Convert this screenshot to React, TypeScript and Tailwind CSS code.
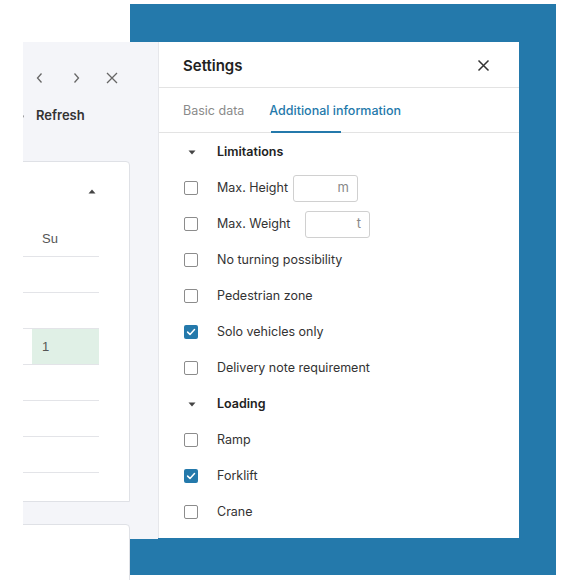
import React from "react";

function Box({ checked }: { checked?: boolean }) {
  if (checked) {
    return (
      <span className="flex h-[14px] w-[14px] shrink-0 items-center justify-center rounded-[2px] bg-[#2479ab]">
        <svg width="10" height="10" viewBox="0 0 10 10">
          <path d="M1.6 5.1 L4 7.4 L8.5 2.6" stroke="white" strokeWidth="1.5" fill="none" strokeLinecap="round" strokeLinejoin="round" />
        </svg>
      </span>
    );
  }
  return <span className="h-[14px] w-[14px] shrink-0 rounded-[2px] border-[1.5px] border-[#8c8c8c] bg-white" />;
}

function Caret() {
  return (
    <svg width="8" height="5" viewBox="0 0 8 5" className="ml-[29px] shrink-0">
      <path d="M0.5 0.5 H7.5 L4 4.5 Z" fill="#444" />
    </svg>
  );
}

function Section({ title }: { title: string }) {
  return (
    <div className="flex h-[36px] items-center">
      <Caret />
      <span className="ml-[21px] text-[12.5px] font-semibold text-[#222]">{title}</span>
    </div>
  );
}

function Row({ label, checked }: { label: string; checked?: boolean }) {
  return (
    <div className="flex h-[36px] items-center pl-[25px]">
      <Box checked={checked} />
      <span className="ml-[19px] text-[12.5px] text-[#333]">{label}</span>
    </div>
  );
}

function UnitInput({ unit }: { unit: string }) {
  return (
    <span className="flex h-[27px] w-[65px] items-center justify-end rounded-[3px] border border-[#d0d0d0] pr-[8px] text-[13px] text-[#888]">
      {unit}
    </span>
  );
}

function TableRow({ children, green }: { children?: React.ReactNode; green?: boolean }) {
  return (
    <div className="flex h-[36px] w-[76px] border-b border-[#e3e4e8]">
      <div className={`ml-[9px] flex w-[67px] items-center pl-[10px] ${green ? "bg-[#e0f0e6]" : ""}`}>{children}</div>
    </div>
  );
}

export default function App() {
  return (
    <div className="relative h-[580px] w-[580px] overflow-hidden bg-white" style={{ fontFamily: "Inter, 'Noto Sans', sans-serif" }}>
      {/* blue backdrop */}
      <div className="absolute left-[130px] top-[4px] h-[571px] w-[426px] bg-[#2479ab]" />

      {/* app window */}
      <div className="absolute left-[23px] top-[42px] flex h-[497px] w-[496px]">
        {/* left gray panel */}
        <div className="relative h-full w-[135px] overflow-hidden bg-[#f4f5f9]">
          <div className="flex h-[72px] items-center pl-[12px]">
            <svg width="10" height="12" viewBox="0 0 10 12">
              <path d="M6.5 1.5 L2.5 6 L6.5 10.5" stroke="#666" strokeWidth="1.3" fill="none" />
            </svg>
            <svg width="10" height="12" viewBox="0 0 10 12" className="ml-[26px]">
              <path d="M3.5 1.5 L7.5 6 L3.5 10.5" stroke="#666" strokeWidth="1.3" fill="none" />
            </svg>
            <svg width="14" height="14" viewBox="0 0 14 14" className="ml-[24px]">
              <path d="M2 2 L12 12 M12 2 L2 12" stroke="#666" strokeWidth="1.3" />
            </svg>
          </div>
          <div className="absolute left-[-11px] top-[64px] flex items-center">
            <svg width="13" height="13" viewBox="0 0 13 13">
              <path d="M11 6.5 A4.5 4.5 0 1 1 9.5 3" stroke="#555" strokeWidth="1.4" fill="none" />
            </svg>
            <span className="ml-[11px] text-[13px] font-semibold text-[#333]">Refresh</span>
          </div>
          {/* card 1 */}
          <div className="absolute left-[-6px] top-[119px] h-[341px] w-[113px] rounded-tr-[4px] border border-[#dfe1e6] bg-white">
            <div className="flex h-[59px] items-center justify-end pr-[33px]">
              <svg width="8" height="5" viewBox="0 0 8 5">
                <path d="M0.5 4.5 H7.5 L4 0.5 Z" fill="#444" />
              </svg>
            </div>
            <div className="ml-[5px]" style={{ fontFamily: "'Liberation Sans', Arial, sans-serif" }}>
              <TableRow>
                <span className="text-[13px] text-[#555]">Su</span>
              </TableRow>
              <TableRow />
              <TableRow />
              <TableRow green>
                <span className="text-[13px] text-[#555]">1</span>
              </TableRow>
              <TableRow />
              <TableRow />
              <TableRow />
            </div>
          </div>
          {/* card 2 */}
          <div className="absolute left-[-6px] top-[482px] h-[60px] w-[113px] rounded-tr-[4px] border border-[#dfe1e6] bg-white" />
        </div>

        {/* settings panel */}
        <div className="flex h-[496px] w-[361px] flex-col border-l border-[#e6e7eb] bg-white">
          <div className="flex h-[46px] shrink-0 items-center justify-between border-b border-[#e3e3e3] pl-[24px] pr-[29px] pt-[3px]">
            <span className="text-[15px] font-semibold text-[#222]">Settings</span>
            <svg width="13" height="13" viewBox="0 0 13 13" className="mb-[2px]">
              <path d="M1.5 1.5 L11.5 11.5 M11.5 1.5 L1.5 11.5" stroke="#333" strokeWidth="1.5" />
            </svg>
          </div>
          <div className="relative flex h-[45px] shrink-0 items-center border-b border-[#e3e3e3] pl-[24px] pt-[2px]">
            <span className="text-[12.5px] text-[#8a8a8a]">Basic data</span>
            <span className="ml-[25px] text-[12.5px] font-medium text-[#2479ab]">Additional information</span>
            <div className="absolute bottom-[-1px] left-[112px] h-[2.5px] w-[70px] bg-[#2479ab]" />
          </div>
          <div className="flex flex-col pt-[1px]">
            <Section title="Limitations" />
            <div className="flex h-[36px] items-center pl-[25px]">
              <Box />
              <span className="ml-[19px] w-[76px] text-[12.5px] text-[#333]">Max. Height</span>
              <UnitInput unit="m" />
            </div>
            <div className="flex h-[36px] items-center pl-[25px]">
              <Box />
              <span className="ml-[19px] w-[88px] text-[12.5px] text-[#333]">Max. Weight</span>
              <UnitInput unit="t" />
            </div>
            <Row label="No turning possibility" />
            <Row label="Pedestrian zone" />
            <Row label="Solo vehicles only" checked />
            <Row label="Delivery note requirement" />
            <Section title="Loading" />
            <Row label="Ramp" />
            <Row label="Forklift" checked />
            <Row label="Crane" />
          </div>
        </div>
      </div>

      {/* continuation of left card below the window */}
      <div className="absolute left-[23px] top-[539px] h-[41px] w-[107px] border-r border-[#dfe1e6] bg-white" />
    </div>
  );
}
